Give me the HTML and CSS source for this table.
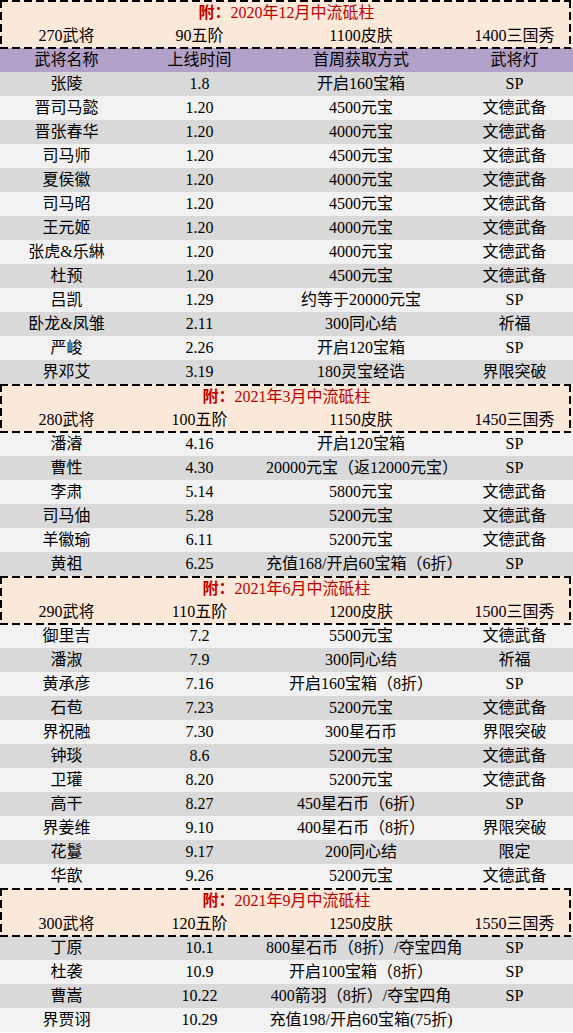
FILE: index.html
```html
<!DOCTYPE html>
<html lang="zh-CN">
<head>
<meta charset="utf-8">
<title>中流砥柱</title>
<link rel="stylesheet" href="styles.css">
</head>
<body>
<div class="sheet">
  <section class="block">
    <div class="title"><b>附：</b>2020年12月中流砥柱</div>
    <div class="row"><span>270武将</span><span>90五阶</span><span>1100皮肤</span><span>1400三国秀</span></div>
  </section>
  <div class="row head"><span>武将名称</span><span>上线时间</span><span>首周获取方式</span><span>武将灯</span></div>
  <div class="row g"><span>张陵</span><span>1.8</span><span>开启160宝箱</span><span>SP</span></div>
  <div class="row l"><span>晋司马懿</span><span>1.20</span><span>4500元宝</span><span>文德武备</span></div>
  <div class="row g"><span>晋张春华</span><span>1.20</span><span>4000元宝</span><span>文德武备</span></div>
  <div class="row l"><span>司马师</span><span>1.20</span><span>4500元宝</span><span>文德武备</span></div>
  <div class="row g"><span>夏侯徽</span><span>1.20</span><span>4000元宝</span><span>文德武备</span></div>
  <div class="row l"><span>司马昭</span><span>1.20</span><span>4500元宝</span><span>文德武备</span></div>
  <div class="row g"><span>王元姬</span><span>1.20</span><span>4000元宝</span><span>文德武备</span></div>
  <div class="row l"><span>张虎&amp;乐綝</span><span>1.20</span><span>4000元宝</span><span>文德武备</span></div>
  <div class="row g"><span>杜预</span><span>1.20</span><span>4500元宝</span><span>文德武备</span></div>
  <div class="row l"><span>吕凯</span><span>1.29</span><span>约等于20000元宝</span><span>SP</span></div>
  <div class="row g"><span>卧龙&amp;凤雏</span><span>2.11</span><span>300同心结</span><span>祈福</span></div>
  <div class="row l"><span>严峻</span><span>2.26</span><span>开启120宝箱</span><span>SP</span></div>
  <div class="row g"><span>界邓艾</span><span>3.19</span><span>180灵宝经诰</span><span>界限突破</span></div>

  <section class="block">
    <div class="title"><b>附：</b>2021年3月中流砥柱</div>
    <div class="row"><span>280武将</span><span>100五阶</span><span>1150皮肤</span><span>1450三国秀</span></div>
  </section>
  <div class="row l"><span>潘濬</span><span>4.16</span><span>开启120宝箱</span><span>SP</span></div>
  <div class="row g"><span>曹性</span><span>4.30</span><span>20000元宝（返12000元宝）</span><span>SP</span></div>
  <div class="row l"><span>李肃</span><span>5.14</span><span>5800元宝</span><span>文德武备</span></div>
  <div class="row g"><span>司马伷</span><span>5.28</span><span>5200元宝</span><span>文德武备</span></div>
  <div class="row l"><span>羊徽瑜</span><span>6.11</span><span>5200元宝</span><span>文德武备</span></div>
  <div class="row g"><span>黄祖</span><span>6.25</span><span>充值168/开启60宝箱（6折）</span><span>SP</span></div>

  <section class="block">
    <div class="title"><b>附：</b>2021年6月中流砥柱</div>
    <div class="row"><span>290武将</span><span>110五阶</span><span>1200皮肤</span><span>1500三国秀</span></div>
  </section>
  <div class="row l"><span>御里吉</span><span>7.2</span><span>5500元宝</span><span>文德武备</span></div>
  <div class="row g"><span>潘淑</span><span>7.9</span><span>300同心结</span><span>祈福</span></div>
  <div class="row l"><span>黄承彦</span><span>7.16</span><span>开启160宝箱（8折）</span><span>SP</span></div>
  <div class="row g"><span>石苞</span><span>7.23</span><span>5200元宝</span><span>文德武备</span></div>
  <div class="row l"><span>界祝融</span><span>7.30</span><span>300星石币</span><span>界限突破</span></div>
  <div class="row g"><span>钟琰</span><span>8.6</span><span>5200元宝</span><span>文德武备</span></div>
  <div class="row l"><span>卫瓘</span><span>8.20</span><span>5200元宝</span><span>文德武备</span></div>
  <div class="row g"><span>高干</span><span>8.27</span><span>450星石币（6折）</span><span>SP</span></div>
  <div class="row l"><span>界姜维</span><span>9.10</span><span>400星石币（8折）</span><span>界限突破</span></div>
  <div class="row g"><span>花鬘</span><span>9.17</span><span>200同心结</span><span>限定</span></div>
  <div class="row l"><span>华歆</span><span>9.26</span><span>5200元宝</span><span>文德武备</span></div>

  <section class="block">
    <div class="title"><b>附：</b>2021年9月中流砥柱</div>
    <div class="row"><span>300武将</span><span>120五阶</span><span>1250皮肤</span><span>1550三国秀</span></div>
  </section>
  <div class="row g"><span>丁原</span><span>10.1</span><span>800星石币（8折）/夺宝四角</span><span>SP</span></div>
  <div class="row l"><span>杜袭</span><span>10.9</span><span>开启100宝箱（8折）</span><span>SP</span></div>
  <div class="row g"><span>曹嵩</span><span>10.22</span><span>400箭羽（8折）/夺宝四角</span><span>SP</span></div>
  <div class="row l"><span>界贾诩</span><span>10.29</span><span>充值198/开启60宝箱(75折)</span><span></span></div>
</div>
</body>
</html>
```
FILE: styles.css
```css
html, body {
  margin: 0;
  padding: 0;
  background: #ffffff;
}

.sheet {
  width: 573px;
  font-family: "Liberation Serif", "Noto Sans CJK SC", serif;
  font-size: 16px;
  color: #000000;
}

.row {
  display: grid;
  grid-template-columns: 133px 133px 190px 117px;
  height: 24px;
  line-height: 24px;
  text-align: center;
  white-space: nowrap;
}

.g { background: #d9d9d9; }
.l { background: #f2f2f2; }
.head { background: #b1a0c7; }

.block {
  position: relative;
  height: 48px;
  background: #fde9d9;
}

.block::after {
  content: "";
  position: absolute;
  top: 0;
  left: 0;
  right: 2px;
  bottom: -1px;
  pointer-events: none;
  background:
    repeating-linear-gradient(90deg, #000 0 8px, transparent 8px 12px) left top / 100% 2px no-repeat,
    repeating-linear-gradient(90deg, #000 0 8px, transparent 8px 12px) left bottom / 100% 2px no-repeat,
    repeating-linear-gradient(180deg, #000 0 8px, transparent 8px 12px) left top / 2px 100% no-repeat,
    repeating-linear-gradient(180deg, #000 0 8px, transparent 8px 12px) right top / 2px 100% no-repeat;
}

.title {
  height: 24px;
  line-height: 26px;
  text-align: center;
  color: #c00000;
}

.title b {
  color: #c00000;
  font-weight: bold;
}
```
